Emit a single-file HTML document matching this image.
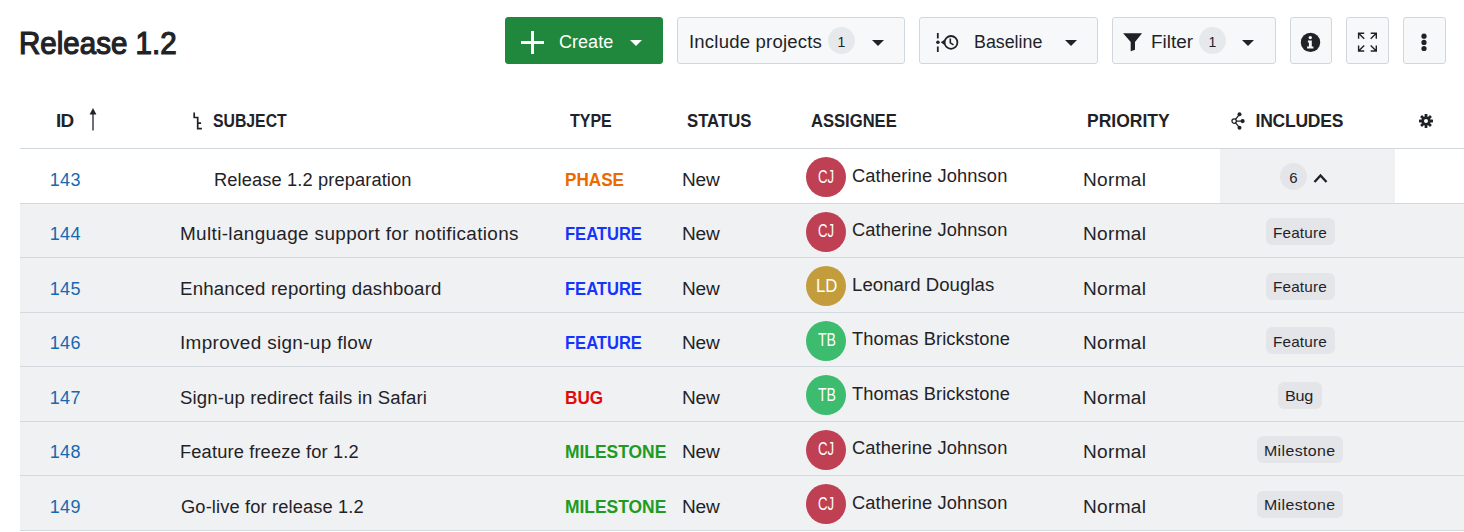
<!DOCTYPE html>
<html><head><meta charset="utf-8"><title>Release 1.2</title>
<style>
*{box-sizing:border-box;margin:0;padding:0}
html,body{width:1464px;height:532px;overflow:hidden;background:#fff}
body{font-family:"Liberation Sans",sans-serif;color:#1f2328;position:relative}
h1{position:absolute;top:25.5px;font-size:31px;font-weight:normal;-webkit-text-stroke:1.2px #1f2328;line-height:36px;color:#1f2328;white-space:nowrap}
.btn{position:absolute;top:17px;height:47px;border:1px solid #d0d7de;border-radius:3px;background:#f6f8fa}
.btn.g{background:#1f883d;border-color:#1f883d}
.bt{position:absolute;top:0;height:45px;line-height:49px;font-size:18px;white-space:nowrap}
.cnt{position:absolute;width:27px;height:27px;border-radius:50%;background:#e6e9ec;font-size:14px;text-align:center;line-height:30px}
.caret{position:absolute;top:22px;width:0;height:0;border-left:6.2px solid transparent;border-right:6.2px solid transparent;border-top:6.3px solid #1f2328;margin-left:-0.5px}
.ic{position:absolute}
.th{position:absolute;top:111px;font-size:17.5px;font-weight:bold;line-height:20px;white-space:nowrap;color:#1f2328}
.hl{position:absolute;left:20px;right:0;top:148px;height:1px;background:#d0d7de}
.row{position:absolute;left:20px;right:0;height:54.5px}
.bg{position:absolute;left:20px;right:0;top:204px;height:326px;background:#f0f1f3}
.ln{position:absolute;left:20px;right:0;height:1px;background:#d3d9df}
.row span{position:absolute;white-space:nowrap;font-size:18px;line-height:22px;top:19.5px}
.row .c1{color:#1469b0}
.row .c3{font-weight:bold;font-size:17.5px}
.row .av{left:786px;top:8px;width:40px;height:40px;border-radius:50%}
.row .c6{top:15.5px}
.row .ai{top:16.5px;color:#fff;font-size:18px;line-height:22px}
.row .bd{top:14.5px;height:27px;border-radius:6px;background:#e3e5e8;font-size:15px;line-height:27px}
.row .bt2{top:15.4px;font-size:15px;line-height:27px}
.inc{position:absolute;left:1220px;top:149px;width:175px;height:54px;background:#f0f1f3}
</style></head><body>
<h1 id="h1" style="left:19.25px;transform:scaleX(0.953);transform-origin:0 50%">Release 1.2</h1>

<div class="btn g" style="left:505px;width:158px">
 <svg class="ic" style="left:14.1px;top:12px" width="25" height="25" viewBox="0 0 25 25"><path d="M12.5 1v23M1 12.5h23" stroke="#fff" stroke-width="3" fill="none"/></svg>
 <span class="bt" id="t_create" style="left:53.0px;letter-spacing:0.04px;color:#fff">Create</span>
 <i class="caret" style="left:124px;border-top-color:#fff"></i>
</div>

<div class="btn" style="left:677px;width:228px">
 <span class="bt" id="t_incl" style="left:10.7px;letter-spacing:0.19px;transform:scaleX(1.030);transform-origin:0 50%">Include projects</span>
 <span class="cnt" style="left:150px;top:9px">1</span>
 <i class="caret" style="left:194px"></i>
</div>

<div class="btn" style="left:919px;width:179px">
 <svg class="ic" style="left:14px;top:13px" width="26" height="23" viewBox="0 0 26 23"><path d="M3.8 1.9v5.7M3.8 15.5v5.5" stroke="#1f2328" stroke-width="1.8" fill="none"/><circle cx="3.9" cy="11.3" r="1.8" fill="#1f2328"/><path d="M6.8 11.3l3.6-2.6v5.2z" fill="#1f2328"/><circle cx="17" cy="11.4" r="6.4" stroke="#1f2328" stroke-width="1.8" fill="none"/><path d="M16.3 7.6v4.3l3.2 2" stroke="#1f2328" stroke-width="1.6" fill="none"/></svg>
 <span class="bt" id="t_base" style="left:54.1px;transform:scaleX(0.990);transform-origin:0 50%">Baseline</span>
 <i class="caret" style="left:145px"></i>
</div>

<div class="btn" style="left:1112px;width:164px">
 <svg class="ic" style="left:10.3px;top:14.6px" width="20" height="20" viewBox="0 0 20 20"><path d="M0.1 0.3h19l-7.1 8.8v7.6l-4.3 1.6v-9.2z" fill="#1f2328"/></svg>
 <span class="bt" id="t_filter" style="left:38.2px;transform:scaleX(1.050);transform-origin:0 50%">Filter</span>
 <span class="cnt" style="left:86px;top:9px">1</span>
 <i class="caret" style="left:129px"></i>
</div>

<div class="btn" style="left:1290px;width:42px">
 <svg class="ic" style="left:9.4px;top:13.5px" width="21" height="21" viewBox="0 0 21 21"><circle cx="10.5" cy="10.4" r="9.7" fill="#1f2328"/><circle cx="10.3" cy="5.6" r="1.7" fill="#f6f8fa"/><path d="M7.9 8.6h3.9v6h1.6v1.8h-6.3v-1.8h1.8v-4.2h-1z" fill="#f6f8fa"/></svg>
</div>

<div class="btn" style="left:1346px;width:43px">
 <svg class="ic" style="left:10px;top:14px" width="21" height="21" viewBox="0 0 21 21" fill="none" stroke="#1f2328" stroke-width="1.4"><path d="M1.6 6.8V1.2h5.6M1.6 1.2l5.6 5.6M13.700000000000001 1.2H19.3v5.6M19.3 1.2l-5.6 5.6M1.6 13.4V19.0h5.6M1.6 19.0l5.6 -5.6M19.3 13.4V19.0h-5.6M19.3 19.0l-5.6 -5.6"/></svg>
</div>

<div class="btn" style="left:1403px;width:43px">
 <svg class="ic" style="left:16.3px;top:15px" width="8" height="20" viewBox="0 0 8 20"><circle cx="4" cy="3.2" r="2.6" fill="#1f2328"/><circle cx="4" cy="9.4" r="2.6" fill="#1f2328"/><circle cx="4" cy="15.5" r="2.6" fill="#1f2328"/></svg>
</div>

<span class="th" id="th_id" style="left:55.5px;letter-spacing:-0.80px;transform:scaleX(1.080);transform-origin:0 50%">ID</span>
<svg class="ic" style="left:87px;top:107px" width="12" height="24" viewBox="0 0 12 24"><path d="M6 6v17.5" stroke="#1f2328" stroke-width="1.3"/><path d="M6 1l3.4 6.4h-6.8z" fill="#1f2328"/></svg>
<svg class="ic" style="left:192px;top:112px" width="12" height="19" viewBox="0 0 12 19"><path d="M2.2 0.5v5h3.5v11.2h4.2M5.7 11.2h3.4" stroke="#1f2328" stroke-width="1.7" fill="none"/></svg>
<span class="th" id="th_subj" style="left:213.0px;transform:scaleX(0.902);transform-origin:0 50%">SUBJECT</span>
<span class="th" id="th_type" style="left:570.4px;transform:scaleX(0.912);transform-origin:0 50%">TYPE</span>
<span class="th" id="th_stat" style="left:687.1px;transform:scaleX(0.955);transform-origin:0 50%">STATUS</span>
<span class="th" id="th_asg" style="left:811.0px;transform:scaleX(0.948);transform-origin:0 50%">ASSIGNEE</span>
<span class="th" id="th_pri" style="left:1087.0px">PRIORITY</span>
<svg class="ic" style="left:1230px;top:112px" width="16" height="19" viewBox="0 0 16 19"><path d="M9.5 2.3L4.15 9.1l5.35 6.6M4.15 9.1h8" stroke="#1f2328" stroke-width="1.3" fill="none"/><circle cx="9.5" cy="2.3" r="2" fill="#1f2328"/><circle cx="12.6" cy="9.1" r="2.1" fill="#1f2328"/><circle cx="9.5" cy="15.7" r="2" fill="#1f2328"/><circle cx="4.15" cy="9.1" r="2.2" fill="#fff" stroke="#1f2328" stroke-width="1.3"/></svg>
<span class="th" id="th_inc" style="left:1255.5px;letter-spacing:-0.22px">INCLUDES</span>
<svg class="ic" style="left:1418px;top:113px" width="16" height="16" viewBox="0 0 16 16"><g fill="#1f2328"><circle cx="8" cy="8" r="4.6"/><rect x="6.6" y="1" width="2.8" height="14" rx="0.4"/><rect x="6.6" y="1" width="2.8" height="14" rx="0.4" transform="rotate(45 8 8)"/><rect x="6.6" y="1" width="2.8" height="14" rx="0.4" transform="rotate(90 8 8)"/><rect x="6.6" y="1" width="2.8" height="14" rx="0.4" transform="rotate(135 8 8)"/></g><circle cx="8" cy="8" r="2" fill="#fff"/></svg>
<div class="hl"></div>
<div class="bg"></div><div class="inc"></div>
<div class="ln" style="top:203px"></div><div class="ln" style="top:257px"></div><div class="ln" style="top:312px"></div><div class="ln" style="top:366px"></div><div class="ln" style="top:421px"></div><div class="ln" style="top:475px"></div><div class="ln" style="top:530px"></div>
<div class="row" style="top:149.0px">
<span class="c1" id="r0_id" style="left:29.7px;letter-spacing:0.35px">143</span><span class="c2" id="r0_s" style="left:194.1px;letter-spacing:0.11px;transform:scaleX(1.015);transform-origin:0 50%">Release 1.2 preparation</span><span class="c3" id="r0_t" style="left:544.6px;transform:scaleX(0.978);transform-origin:0 50%;color:#eb6a00">PHASE</span><span class="c4" id="r0_st" style="left:662.3px;letter-spacing:-0.23px;transform:scaleX(1.060);transform-origin:0 50%">New</span>
<span class="av" style="background:#bf3f53"></span><span class="ai" id="r0_a" style="left:798.0px;transform:scaleX(0.732);transform-origin:0 50%">CJ</span><span class="c6" id="r0_n" style="left:832.0px;letter-spacing:0.12px;transform:scaleX(1.015);transform-origin:0 50%">Catherine Johnson</span><span class="c7" id="r0_p" style="left:1063.0px;letter-spacing:0.28px;transform:scaleX(1.060);transform-origin:0 50%">Normal</span><span class="bd" style="left:1260px;top:14px;width:27px;height:27px;border-radius:50%;background:#e3e5e8;text-align:center;line-height:30.6px">6</span><svg class="ic" style="left:1293px;top:23.2px" width="15" height="12" viewBox="0 0 15 12"><path d="M1.5 10l6-6.5 6 6.5" stroke="#1f2328" stroke-width="2.4" fill="none"/></svg>
</div>
<div class="row" style="top:203.5px">
<span class="c1" id="r1_id" style="left:29.7px;letter-spacing:0.35px">144</span><span class="c2" id="r1_s" style="left:160.0px;letter-spacing:0.34px;transform:scaleX(1.050);transform-origin:0 50%">Multi-language support for notifications</span><span class="c3" id="r1_t" style="left:544.6px;transform:scaleX(0.945);transform-origin:0 50%;color:#1634fa">FEATURE</span><span class="c4" id="r1_st" style="left:662.3px;letter-spacing:-0.23px;transform:scaleX(1.060);transform-origin:0 50%">New</span>
<span class="av" style="background:#bf3f53"></span><span class="ai" id="r1_a" style="left:798.0px;transform:scaleX(0.732);transform-origin:0 50%">CJ</span><span class="c6" id="r1_n" style="left:832.0px;letter-spacing:0.12px;transform:scaleX(1.015);transform-origin:0 50%">Catherine Johnson</span><span class="c7" id="r1_p" style="left:1063.0px;letter-spacing:0.28px;transform:scaleX(1.060);transform-origin:0 50%">Normal</span><span class="bd" style="left:1245.5px;width:69px"></span><span class="bt2" id="r1_b" style="left:1252.7px;letter-spacing:0.16px;transform:scaleX(1.020);transform-origin:0 50%">Feature</span>
</div>
<div class="row" style="top:258.0px">
<span class="c1" id="r2_id" style="left:29.7px;letter-spacing:0.35px">145</span><span class="c2" id="r2_s" style="left:160.0px;letter-spacing:0.20px;transform:scaleX(1.035);transform-origin:0 50%">Enhanced reporting dashboard</span><span class="c3" id="r2_t" style="left:544.6px;transform:scaleX(0.945);transform-origin:0 50%;color:#1634fa">FEATURE</span><span class="c4" id="r2_st" style="left:662.3px;letter-spacing:-0.23px;transform:scaleX(1.060);transform-origin:0 50%">New</span>
<span class="av" style="background:#c39d3c"></span><span class="ai" id="r2_a" style="left:795.5px;transform:scaleX(0.930);transform-origin:0 50%">LD</span><span class="c6" id="r2_n" style="left:831.6px;letter-spacing:0.07px;transform:scaleX(1.030);transform-origin:0 50%">Leonard Douglas</span><span class="c7" id="r2_p" style="left:1063.0px;letter-spacing:0.28px;transform:scaleX(1.060);transform-origin:0 50%">Normal</span><span class="bd" style="left:1245.5px;width:69px"></span><span class="bt2" id="r2_b" style="left:1252.7px;letter-spacing:0.16px;transform:scaleX(1.020);transform-origin:0 50%">Feature</span>
</div>
<div class="row" style="top:312.5px">
<span class="c1" id="r3_id" style="left:29.7px;letter-spacing:0.35px">146</span><span class="c2" id="r3_s" style="left:160.0px;letter-spacing:0.33px;transform:scaleX(1.050);transform-origin:0 50%">Improved sign-up flow</span><span class="c3" id="r3_t" style="left:544.6px;transform:scaleX(0.945);transform-origin:0 50%;color:#1634fa">FEATURE</span><span class="c4" id="r3_st" style="left:662.3px;letter-spacing:-0.23px;transform:scaleX(1.060);transform-origin:0 50%">New</span>
<span class="av" style="background:#3dbb6e"></span><span class="ai" id="r3_a" style="left:798.2px;transform:scaleX(0.782);transform-origin:0 50%">TB</span><span class="c6" id="r3_n" style="left:832.0px;letter-spacing:0.09px;transform:scaleX(1.015);transform-origin:0 50%">Thomas Brickstone</span><span class="c7" id="r3_p" style="left:1063.0px;letter-spacing:0.28px;transform:scaleX(1.060);transform-origin:0 50%">Normal</span><span class="bd" style="left:1245.5px;width:69px"></span><span class="bt2" id="r3_b" style="left:1252.7px;letter-spacing:0.16px;transform:scaleX(1.020);transform-origin:0 50%">Feature</span>
</div>
<div class="row" style="top:367.0px">
<span class="c1" id="r4_id" style="left:29.7px;letter-spacing:0.35px">147</span><span class="c2" id="r4_s" style="left:160.0px;letter-spacing:0.15px;transform:scaleX(1.030);transform-origin:0 50%">Sign-up redirect fails in Safari</span><span class="c3" id="r4_t" style="left:544.6px;transform:scaleX(0.980);transform-origin:0 50%;color:#df0b0b">BUG</span><span class="c4" id="r4_st" style="left:662.3px;letter-spacing:-0.23px;transform:scaleX(1.060);transform-origin:0 50%">New</span>
<span class="av" style="background:#3dbb6e"></span><span class="ai" id="r4_a" style="left:798.2px;transform:scaleX(0.782);transform-origin:0 50%">TB</span><span class="c6" id="r4_n" style="left:832.0px;letter-spacing:0.09px;transform:scaleX(1.015);transform-origin:0 50%">Thomas Brickstone</span><span class="c7" id="r4_p" style="left:1063.0px;letter-spacing:0.28px;transform:scaleX(1.060);transform-origin:0 50%">Normal</span><span class="bd" style="left:1258.0px;width:44px"></span><span class="bt2" id="r4_b" style="left:1265.2px;letter-spacing:-0.23px;transform:scaleX(1.080);transform-origin:0 50%">Bug</span>
</div>
<div class="row" style="top:421.5px">
<span class="c1" id="r5_id" style="left:29.7px;letter-spacing:0.35px">148</span><span class="c2" id="r5_s" style="left:160.0px;letter-spacing:0.14px;transform:scaleX(1.015);transform-origin:0 50%">Feature freeze for 1.2</span><span class="c3" id="r5_t" style="left:544.6px;transform:scaleX(0.995);transform-origin:0 50%;color:#209a22">MILESTONE</span><span class="c4" id="r5_st" style="left:662.3px;letter-spacing:-0.23px;transform:scaleX(1.060);transform-origin:0 50%">New</span>
<span class="av" style="background:#bf3f53"></span><span class="ai" id="r5_a" style="left:798.0px;transform:scaleX(0.732);transform-origin:0 50%">CJ</span><span class="c6" id="r5_n" style="left:832.0px;letter-spacing:0.12px;transform:scaleX(1.015);transform-origin:0 50%">Catherine Johnson</span><span class="c7" id="r5_p" style="left:1063.0px;letter-spacing:0.28px;transform:scaleX(1.060);transform-origin:0 50%">Normal</span><span class="bd" style="left:1237.0px;width:86px"></span><span class="bt2" id="r5_b" style="left:1244.1px;letter-spacing:0.35px;transform:scaleX(1.060);transform-origin:0 50%">Milestone</span>
</div>
<div class="row" style="top:476.0px">
<span class="c1" id="r6_id" style="left:29.7px;letter-spacing:0.35px">149</span><span class="c2" id="r6_s" style="left:160.7px;letter-spacing:0.13px;transform:scaleX(1.015);transform-origin:0 50%">Go-live for release 1.2</span><span class="c3" id="r6_t" style="left:544.6px;transform:scaleX(0.995);transform-origin:0 50%;color:#209a22">MILESTONE</span><span class="c4" id="r6_st" style="left:662.3px;letter-spacing:-0.23px;transform:scaleX(1.060);transform-origin:0 50%">New</span>
<span class="av" style="background:#bf3f53"></span><span class="ai" id="r6_a" style="left:798.0px;transform:scaleX(0.732);transform-origin:0 50%">CJ</span><span class="c6" id="r6_n" style="left:832.0px;letter-spacing:0.12px;transform:scaleX(1.015);transform-origin:0 50%">Catherine Johnson</span><span class="c7" id="r6_p" style="left:1063.0px;letter-spacing:0.28px;transform:scaleX(1.060);transform-origin:0 50%">Normal</span><span class="bd" style="left:1237.0px;width:86px"></span><span class="bt2" id="r6_b" style="left:1244.1px;letter-spacing:0.35px;transform:scaleX(1.060);transform-origin:0 50%">Milestone</span>
</div>
</body></html>
